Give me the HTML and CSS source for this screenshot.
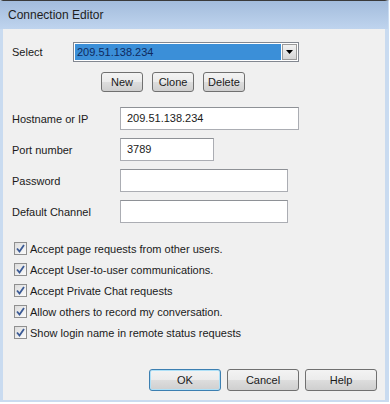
FILE: index.html
```html
<!doctype html>
<html lang="en">
<head>
<meta charset="utf-8">
<title>Connection Editor</title>
<link rel="stylesheet" href="styles.css">
</head>
<body>
  <div class="window">
    <div class="titlebar">Connection Editor</div>

    <div class="content">
      <div class="row select-row">
        <span class="label short">Select</span>
        <div class="combo">
          <span class="combo-value">209.51.138.234</span>
          <span class="combo-btn">
            <svg width="7" height="4" viewBox="0 0 7 4"><path d="M0 0h7L3.5 4z" fill="#000"/></svg>
          </span>
        </div>
      </div>

      <div class="row tools">
        <button class="btn small">New</button>
        <button class="btn small">Clone</button>
        <button class="btn small">Delete</button>
      </div>

      <div class="fields">
        <div class="row field">
          <span class="label">Hostname or IP</span>
          <div class="input host">209.51.138.234</div>
        </div>
        <div class="row field">
          <span class="label">Port number</span>
          <div class="input port">3789</div>
        </div>
        <div class="row field">
          <span class="label">Password</span>
          <div class="input wide"></div>
        </div>
        <div class="row field">
          <span class="label">Default Channel</span>
          <div class="input wide"></div>
        </div>
      </div>

      <ul class="checks">
        <li><span class="check"><svg width="9" height="9" viewBox="0 0 9 9"><path d="M1 4.5l2.5 3L8 1" fill="none" stroke="#3b5a95" stroke-width="1.8"/></svg></span>Accept page requests from other users.</li>
        <li><span class="check"><svg width="9" height="9" viewBox="0 0 9 9"><path d="M1 4.5l2.5 3L8 1" fill="none" stroke="#3b5a95" stroke-width="1.8"/></svg></span>Accept User-to-user communications.</li>
        <li><span class="check"><svg width="9" height="9" viewBox="0 0 9 9"><path d="M1 4.5l2.5 3L8 1" fill="none" stroke="#3b5a95" stroke-width="1.8"/></svg></span>Accept Private Chat requests</li>
        <li><span class="check"><svg width="9" height="9" viewBox="0 0 9 9"><path d="M1 4.5l2.5 3L8 1" fill="none" stroke="#3b5a95" stroke-width="1.8"/></svg></span>Allow others to record my conversation.</li>
        <li><span class="check"><svg width="9" height="9" viewBox="0 0 9 9"><path d="M1 4.5l2.5 3L8 1" fill="none" stroke="#3b5a95" stroke-width="1.8"/></svg></span>Show login name in remote status requests</li>
      </ul>

      <div class="row actions">
        <button class="btn wide-btn default">OK</button>
        <button class="btn wide-btn">Cancel</button>
        <button class="btn wide-btn">Help</button>
      </div>
    </div>
  </div>
</body>
</html>
```

FILE: styles.css
```css
  * {
    box-sizing: border-box;
  }

  body {
    margin: 0;
    background-color: #fff;
    font-family: "Liberation Sans", Arial, sans-serif;
    font-size: 11px;
    color: #1a1a1a;
  }

  .window {
    width: 389px;
    height: 402px;
    border-top: 1px solid #3a3a3a;
    border-left: 3px solid #c9dbf0;
    border-right: 4px solid #c9dbf0;
    border-bottom: 2px solid #c9dbf0;
    background-color: #f0f0f0;
    display: flex;
    flex-direction: column;
  }

  .titlebar {
    height: 28px;
    margin: 0 -3px 0 -3px;
    padding: 0 0 0 8px;
    line-height: 28px;
    font-size: 12px;
    color: #1e1e1e;
    background: linear-gradient(#a3bcdc, #bfd4ee);
  }

  .content {
    flex: 1;
    display: flex;
    flex-direction: column;
    padding: 13px 0 0 9px;
  }

  .row {
    display: flex;
    align-items: center;
  }

  .label {
    width: 108px;
  }

  .label.short {
    width: 61px;
  }

  .combo {
    width: 226px;
    height: 20px;
    border: 1px solid #828790;
    background-color: #fff;
    padding: 1px;
    display: flex;
  }

  .combo-value {
    flex: 1;
    background-color: #3b8fd8;
    color: #0f2a5e;
    padding-left: 2px;
    line-height: 16px;
  }

  .combo-btn {
    width: 15px;
    margin-left: 1px;
    border: 1px solid #9a9a9a;
    background: linear-gradient(#f2f2f2, #d6d6d6);
    display: flex;
    align-items: center;
    justify-content: center;
  }

  .tools {
    margin-top: 10px;
    padding-left: 89px;
    gap: 9px;
  }

  .btn {
    font-family: inherit;
    font-size: 11px;
    color: #1a1a1a;
    border: 1px solid #707070;
    border-radius: 3px;
    background: linear-gradient(#f3f3f3 0%, #ebebeb 50%, #dddddd 51%, #cfcfcf 100%);
    padding: 0;
    height: 20px;
  }

  .btn.small {
    width: 42px;
  }

  .fields {
    margin-top: 15px;
    display: flex;
    flex-direction: column;
    gap: 8px;
  }

  .field {
    height: 23px;
  }

  .input {
    height: 100%;
    border: 1px solid #abadb3;
    border-top-color: #8e9196;
    background-color: #fff;
    padding: 4px 0 0 6px;
    color: #1a1a1a;
  }

  .input.host {
    width: 179px;
  }

  .input.port {
    width: 94px;
  }

  .input.wide {
    width: 168px;
  }

  .checks {
    list-style: none;
    margin: 18px 0 0 0;
    padding: 0 0 0 2px;
    display: flex;
    flex-direction: column;
    gap: 6px;
  }

  .checks li {
    display: flex;
    align-items: center;
    height: 15px;
  }

  .check {
    width: 13px;
    height: 13px;
    margin-right: 3px;
    border: 1px solid #8f8f8f;
    background: linear-gradient(135deg, #dcdcdc, #fbfbfb);
    display: flex;
    align-items: center;
    justify-content: center;
  }

  .actions {
    margin-top: auto;
    margin-bottom: 9px;
    padding-left: 137px;
    gap: 6px;
  }

  .btn.wide-btn {
    width: 72px;
    height: 22px;
  }

  .btn.default {
    border-color: #3c7fb1;
    box-shadow: inset 0 0 0 1px #aee0f7;
  }
```
